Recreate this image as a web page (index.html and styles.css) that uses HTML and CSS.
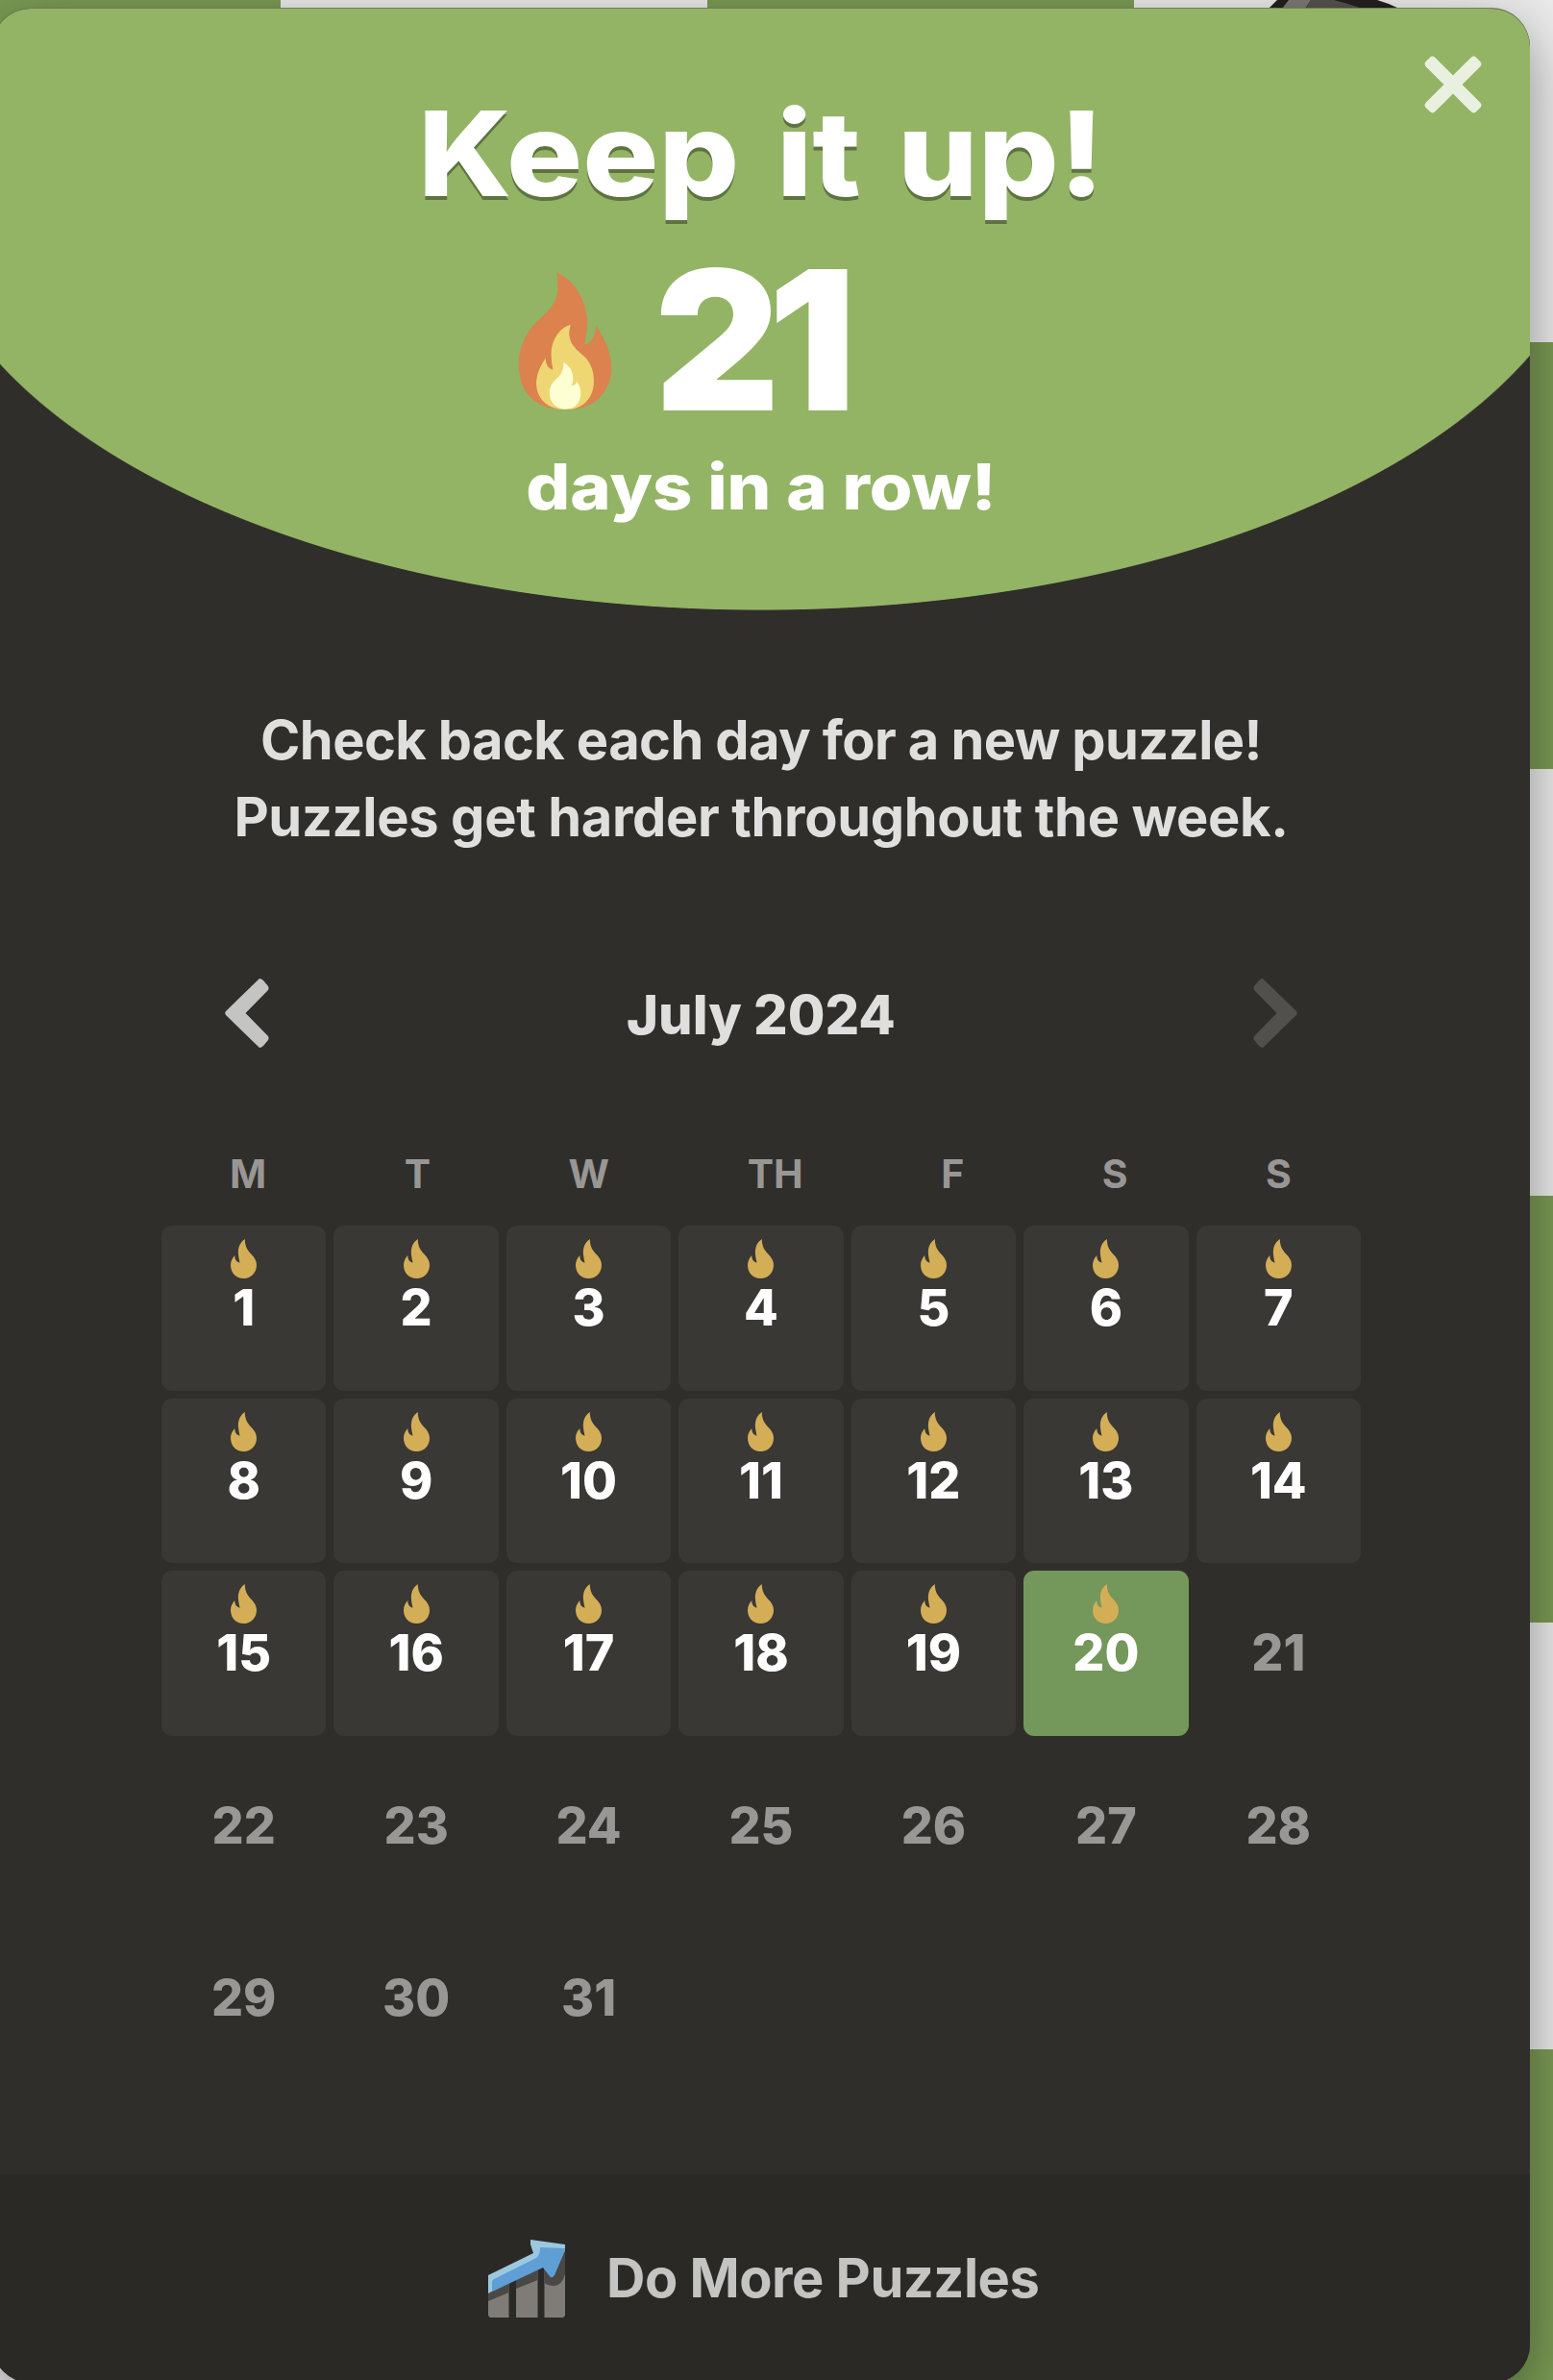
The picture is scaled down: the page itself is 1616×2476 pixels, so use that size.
FILE: index.html
```html
<!DOCTYPE html>
<html lang="en">
<head>
<meta charset="utf-8">
<title>Daily Puzzle Streak</title>
<link rel="stylesheet" href="styles.css">
</head>
<body>
<svg class="defs" aria-hidden="true">
  <symbol id="flame" viewBox="45 41 82 123" preserveAspectRatio="none">
    <path d="M90 41C74 52 68 68 69 86C70 98 72 106 74 115C64 113 58 105 58 92C50 101 45 110 45 123C46 148 62 164 86 164C110 164 127 146 127 122C127 108 120 98 110 88C98 76 90 64 90 41Z"/>
  </symbol>
</svg>
<svg class="piece" viewBox="0 0 136 9" aria-hidden="true">
  <path fill="#22211f" d="M0 9L9 0H113Q124 3 136 9Z"/>
  <path fill="#7b7a76" d="M14 9L21 0H44L38 9Z"/>
  <path fill="#54534f" d="M38 9L44 0H68Q84 4 98 9Z"/>
</svg>
<main class="modal">
  <button class="close" aria-label="Close">
    <svg viewBox="-30 -30 60 60"><rect x="-37" y="-6.7" width="74" height="13.4" rx="4" transform="rotate(45)"/><rect x="-37" y="-6.7" width="74" height="13.4" rx="4" transform="rotate(-45)"/></svg>
  </button>
  <header class="hero">
    <h1 class="title">Keep it up!</h1>
    <div class="streak">
      <svg class="fire" viewBox="117 69 294 430">
        <path fill="#db824e" d="M238 70C290 95 330 150 334 225C334 250 328 275 325 297C345 292 362 265 361 236C385 275 411 320 409 375C407 430 370 480 320 492C300 498 270 499 250 498C220 498 190 490 165 470C130 440 118 400 119 350C122 300 145 250 185 215C225 180 245 150 241 110C242 95 240 80 238 70Z"/>
        <path fill="#eed772" d="M281 234C245 245 225 280 221 315C220 335 222 355 226 374C212 372 204 360 203 338C185 365 174 390 174 420C176 460 200 490 245 498H285C325 490 354 460 354 410C354 370 340 345 315 325C290 305 275 285 277 255Z"/>
        <path fill="#fefed3" d="M259 352C280 362 290 385 289 405L285 425C295 424 300 418 299 411C308 420 314 435 313 450C312 480 295 497 264 498C235 497 216 478 215 448C215 425 228 412 240 400C255 388 260 370 259 352Z"/>
      </svg>
      <span class="count">21</span>
    </div>
    <p class="days">days in a row!</p>
  </header>
  <p class="info"><span class="l1">Check back each day for a new puzzle!</span><br><span>Puzzles get harder throughout the week.</span></p>
  <nav class="month">
    <svg class="arrow" viewBox="0 0 46 72"><path d="M36 0Q38 0 40 2L45 8Q46 10 45 12L21.500 36L45 60Q46 62 45 64L40 70Q38 72 36 72L1 38Q-.500 36 1 34Z"/></svg>
    <h2>July 2024</h2>
    <svg class="arrow next" viewBox="0 0 46 72"><path d="M36 0Q38 0 40 2L45 8Q46 10 45 12L21.500 36L45 60Q46 62 45 64L40 70Q38 72 36 72L1 38Q-.500 36 1 34Z"/></svg>
  </nav>
  <div class="weekdays"><span>M</span><span>T</span><span>W</span><span>TH</span><span>F</span><span>S</span><span>S</span></div>
  <div class="grid">
    <div class="day done"><svg><use href="#flame"/></svg>1</div>
    <div class="day done"><svg><use href="#flame"/></svg>2</div>
    <div class="day done"><svg><use href="#flame"/></svg>3</div>
    <div class="day done"><svg><use href="#flame"/></svg>4</div>
    <div class="day done"><svg><use href="#flame"/></svg>5</div>
    <div class="day done"><svg><use href="#flame"/></svg>6</div>
    <div class="day done"><svg><use href="#flame"/></svg>7</div>
    <div class="day done"><svg><use href="#flame"/></svg>8</div>
    <div class="day done"><svg><use href="#flame"/></svg>9</div>
    <div class="day done"><svg><use href="#flame"/></svg>10</div>
    <div class="day done"><svg><use href="#flame"/></svg>11</div>
    <div class="day done"><svg><use href="#flame"/></svg>12</div>
    <div class="day done"><svg><use href="#flame"/></svg>13</div>
    <div class="day done"><svg><use href="#flame"/></svg>14</div>
    <div class="day done"><svg><use href="#flame"/></svg>15</div>
    <div class="day done"><svg><use href="#flame"/></svg>16</div>
    <div class="day done"><svg><use href="#flame"/></svg>17</div>
    <div class="day done"><svg><use href="#flame"/></svg>18</div>
    <div class="day done"><svg><use href="#flame"/></svg>19</div>
    <div class="day done today"><svg><use href="#flame"/></svg>20</div>
    <div class="day">21</div>
    <div class="day">22</div>
    <div class="day">23</div>
    <div class="day">24</div>
    <div class="day">25</div>
    <div class="day">26</div>
    <div class="day">27</div>
    <div class="day">28</div>
    <div class="day">29</div>
    <div class="day">30</div>
    <div class="day">31</div>
  </div>
  <footer class="more">
    <svg class="chart" viewBox="0 0 80 82">
      <path fill="#7f7c77" d="M0 50L21.500 40V81H2L0 79ZM29 36L51.500 22V81H29ZM58.500 20H80V79L78 81H58.500Z"/>
      <path fill="#4a4845" d="M0 55L21.500 43V55L0 64ZM29 40L51.500 28V42L29 51ZM58.500 28L80 10V36Q77 47 69 48Q62 48 58.500 45Z"/>
      <path fill="#9cc7e0" d="M0 37L47 14L44 5V0L80 5V12L56 24L0 56Z"/>
      <path fill="#5f9fd6" d="M4 54V44Q4 42 6 41L50 19Q54 16 54 8L80 9V11L69 37Q66 41 64 38L57 29L0 56Z"/>
    </svg>
    <span>Do More Puzzles</span>
  </footer>
</main>
</body>
</html>
```

FILE: styles.css
```css
* { box-sizing: border-box; margin: 0; padding: 0; }
html, body { height: 2476px; overflow: hidden; }
body {
  font-family: Inter, "Liberation Sans", sans-serif;
  background: conic-gradient(#ebebeb 25%, #7a9a54 0 50%, #ebebeb 0 75%, #7a9a54 0) 292px 356px / 888px 888px;
  padding-top: 9px;
}
.defs { position: absolute; width: 0; height: 0; }
.piece { position: absolute; left: 1320px; top: 0; width: 136px; height: 9px; }
.modal {
  position: relative;
  display: flex;
  flex-direction: column;
  width: 1600px;
  height: 2470px;
  margin-left: -8px;
  border-radius: 40px;
  overflow: hidden;
  background: #302e2b;
  box-shadow: 0 -1px 0 #6f7f55, 0 18px 60px rgba(0, 0, 0, .4);
}
.close {
  position: absolute;
  right: 50px;
  top: 49px;
  width: 60px;
  height: 60px;
  border: 0;
  background: none;
}
.close svg { display: block; fill: #e9f0e0; }
.hero {
  height: 626px;
  padding-top: 90px;
  color: #fff;
  background: radial-gradient(875px 444px at 800px 182px, #93b465 99.8%, transparent 100%);
}
.title {
  text-align: center;
  font-size: 122px;
  line-height: 122px;
  font-weight: 850;
  word-spacing: 9px;
  transform: scaleX(1.08);
  text-shadow: 0 4px 0 #5e7440;
}
.streak { display: flex; margin: 32px 0 0 547px; height: 202px; }
.fire { width: 98px; height: 143px; margin-top: 30px; }
.count { margin-left: 44px; font-size: 202px; line-height: 202px; font-weight: 900; letter-spacing: -12px; }
.days { margin-top: 18px; text-align: center; font-size: 66px; line-height: 66px; font-weight: 800; transform: scaleX(1.093); }
.info {
  margin-top: 95px;
  text-align: center;
  font-size: 56px;
  line-height: 80px;
  font-weight: 650;
  letter-spacing: -.350px;
  color: #dfdfde;
}
.l1 { letter-spacing: -.600px; }
.month {
  display: flex;
  align-items: center;
  justify-content: space-between;
  margin: 126px 242px 0;
  height: 80px;
  color: #dfdfde;
}
.month h2 { font-size: 56px; line-height: 80px; font-weight: 800; }
.arrow { width: 46px; height: 72px; fill: #c4c4c2; position: relative; top: -2px; }
.next { transform: scaleX(-1); fill: #51504c; }
.weekdays {
  display: flex;
  justify-content: space-between;
  margin: 104px 248px 0 247px;
  font-size: 41px;
  line-height: 42px;
  font-weight: 700;
  color: #989795;
}
.grid {
  display: grid;
  grid-template-columns: repeat(7, 1fr);
  grid-auto-rows: 171.600px;
  gap: 8px;
  margin: 33px 176px 0;
}
.day {
  padding-top: 60px;
  text-align: center;
  font-size: 52px;
  line-height: 52px;
  font-weight: 800;
  color: #989795;
}
.done { padding-top: 14px; border-radius: 11px; background: #3a3835; color: #fff; }
.day svg { display: block; width: 27px; height: 41px; margin: 0 auto 5px; fill: #d4ae57; }
.today { background: #74975b; }
.more {
  display: flex;
  align-items: center;
  height: 217px;
  margin-top: auto;
  padding-left: 516px;
  background: #2a2926;
}
.chart { width: 80px; height: 82px; }
.more span { margin-left: 43px; font-size: 56px; font-weight: 650; letter-spacing: -.500px; color: #c4c4c2; position: relative; top: -1px; }
```
